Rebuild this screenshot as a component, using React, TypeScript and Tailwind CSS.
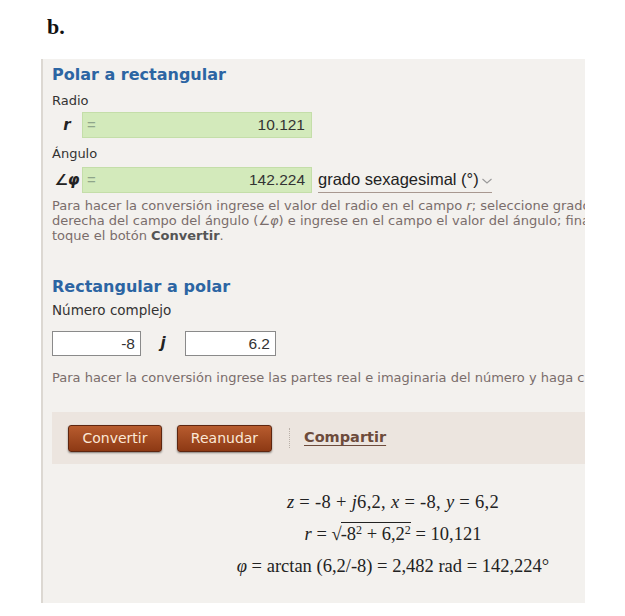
export default function App() {
  return (
    <div className="w-[625px] h-[616px] bg-white overflow-hidden">
      <div className="pl-[47px] pt-[14px] h-[59px] text-[22px] leading-[26px] font-bold text-[#111] font-['Liberation_Serif',serif]">
        b.
      </div>
      <div className="ml-[41px] w-[544px] h-[544px] bg-[#f3f1ee] border-l-2 border-[#dcd8d2] overflow-hidden font-['DejaVu_Sans',sans-serif]">
        <div className="w-[720px] pl-[9px] pt-[6px]">
          <div className="h-[20px] leading-[20px] text-[16px] font-bold text-[#2c65a3]">Polar a rectangular</div>
          <div className="mt-[8px] h-[16px] leading-[16px] text-[13px] text-[#333]">Radio</div>
          <div className="mt-[3px] flex h-[26px] items-center">
            <div className="w-[30px] text-center text-[15px] font-bold italic text-[#222]">r</div>
            <div className="flex h-[26px] w-[230px] items-center justify-between border border-[#c4dea9] bg-[#d3eabb] pl-[4px] pr-[6px] font-['Liberation_Sans',sans-serif]">
              <span className="text-[15px] text-[#8fa58a]">=</span>
              <span className="text-[15.5px] text-[#333]">10.121</span>
            </div>
          </div>
          <div className="mt-[8px] h-[16px] leading-[16px] text-[13px] text-[#333]">Ángulo</div>
          <div className="mt-[5px] flex h-[26px] items-center">
            <div className="w-[30px] text-center text-[15px] font-bold italic text-[#222]">∠φ</div>
            <div className="flex h-[26px] w-[230px] items-center justify-between border border-[#c4dea9] bg-[#d3eabb] pl-[4px] pr-[6px] font-['Liberation_Sans',sans-serif]">
              <span className="text-[15px] text-[#8fa58a]">=</span>
              <span className="text-[15.5px] text-[#333]">142.224</span>
            </div>
            <div className="ml-[6px] flex h-[26px] w-[174px] items-center border-b border-[#a89890] font-['Liberation_Sans',sans-serif] text-[16.5px] text-[#222]">
              <span className="whitespace-nowrap">grado sexagesimal (°)</span>
              <svg width="12" height="8" viewBox="0 0 12 8" className="ml-[2px] mt-[2px] shrink-0">
                <path d="M1.5 2 L6 6 L10.5 2" fill="none" stroke="#999" strokeWidth="1.1" />
              </svg>
            </div>
          </div>
          <p className="mt-[5px] w-[720px] text-[13px] leading-[15px] text-[#7a6d6b]">
            Para hacer la conversión ingrese el valor del radio en el campo <i>r</i>; seleccione grados o radianes a la
            <br />
            derecha del campo del ángulo (<i>∠φ</i>) e ingrese en el campo el valor del ángulo; finalmente
            <br />
            toque el botón <b className="text-[#555]">Convertir</b>.
          </p>
          <div className="mt-[34px] h-[20px] leading-[20px] text-[16px] font-bold text-[#2c65a3]">Rectangular a polar</div>
          <div className="mt-[5px] h-[16px] leading-[16px] text-[13.5px] text-[#333]">Número complejo</div>
          <div className="mt-[13px] flex h-[25px] items-center font-['Liberation_Sans',sans-serif]">
            <div className="flex h-[25px] w-[89px] items-center justify-end border border-[#8a8a8a] bg-white pr-[5px] text-[15.5px] text-[#333]">-8</div>
            <div className="w-[44px] text-center text-[15px] font-bold italic text-[#222] font-['DejaVu_Sans',sans-serif]">j</div>
            <div className="flex h-[25px] w-[91px] items-center justify-end border border-[#8a8a8a] bg-white pr-[5px] text-[15.5px] text-[#333]">6.2</div>
          </div>
          <p className="mt-[14px] h-[15px] w-[720px] whitespace-nowrap text-[13px] leading-[15px] text-[#7a6d6b]">
            Para hacer la conversión ingrese las partes real e imaginaria del número y haga clic
          </p>
          <div className="mt-[27px] flex h-[52px] w-[720px] items-center bg-[#ece5df] pl-[16px]">
            <button className="h-[27px] w-[94px] rounded-[3px] border border-[#5e2610] bg-linear-to-b from-[#b85c2e] to-[#8d3914] text-[14px] text-[#fbe8d6] shadow-[0_1px_2px_rgba(0,0,0,0.45)]">
              Convertir
            </button>
            <button className="ml-[15px] h-[27px] w-[95px] rounded-[3px] border border-[#5e2610] bg-linear-to-b from-[#b85c2e] to-[#8d3914] text-[14px] text-[#fbe8d6] shadow-[0_1px_2px_rgba(0,0,0,0.45)]">
              Reanudar
            </button>
            <div className="ml-[17px] h-[20px] border-l border-dotted border-[#b9b0a8]" />
            <span className="ml-[14px] text-[14.5px] font-bold text-[#6d4b3c] underline underline-offset-[3px]">Compartir</span>
          </div>
          <div className="mt-[22px] w-[682px] text-center font-['Liberation_Serif',serif] text-[18.5px] leading-[32px] text-[#222]">
            <div className="tracking-[0.3px]">
              <i>z</i> = -8 + <i>j</i>6,2, <i>x</i> = -8, <i>y</i> = 6,2
            </div>
            <div>
              <i>r</i> = <span className="-mr-[1px]">√</span>
              <span className="border-t border-[#222] pt-[1px]">
                -8<sup className="text-[12px]">2</sup> + 6,2<sup className="text-[12px]">2</sup>
              </span>{" "}
              = 10,121
            </div>
            <div>
              <i>φ</i> = arctan (6,2/-8) = 2,482 rad = 142,224°
            </div>
          </div>
        </div>
      </div>
    </div>
  );
}
